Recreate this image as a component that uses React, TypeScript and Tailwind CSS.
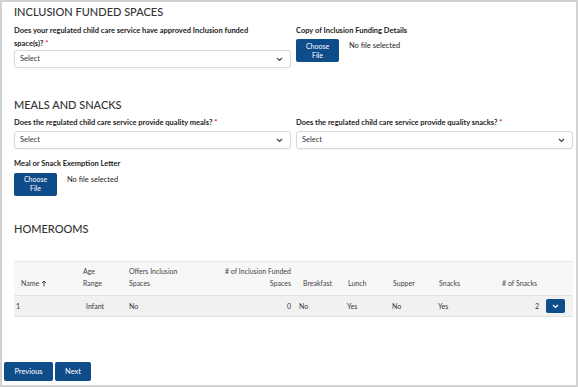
import React from "react";

const BLUE = "bg-[#0f4c8a]";

function Chevron({ className = "" }: { className?: string }) {
  return (
    <svg width="7" height="5" viewBox="0 0 7 5" className={className}>
      <polyline points="1,1 3.5,3.5 6,1" fill="none" stroke="currentColor" strokeWidth="1.2" />
    </svg>
  );
}

function SelectBox() {
  return (
    <div className="h-[18px] border border-[#d9d9d9] rounded-[3px] bg-white flex items-center justify-between pl-[5px] pr-[7px] shadow-[0_1px_1px_rgba(0,0,0,0.04)]">
      <span className="text-[7.5px] text-[#333]">Select</span>
      <Chevron className="text-[#444]" />
    </div>
  );
}

function FileInput() {
  return (
    <div className="flex items-start">
      <button className={`${BLUE} w-[43px] h-[23px] rounded-[2px] text-white text-[7px] leading-[9px] flex flex-col items-center justify-center`}>
        <span>Choose</span>
        <span>File</span>
      </button>
      <span className="ml-[10px] mt-[1px] text-[7.5px] leading-[12px] text-[#222]">No file selected</span>
    </div>
  );
}

const Star = () => <span className="text-[#d4262c]"> *</span>;

const cols = "grid grid-cols-[69px_46px_71px_94px_51px_45px_46px_54px_51px_32px]";

export default function App() {
  return (
    <div
      className="w-[578px] h-[387px] border-2 border-[#d2d2d2] bg-white pl-[12px] pr-[3px] pt-[2px] text-[#222]"
      style={{ fontFamily: "Lato, 'Noto Sans', sans-serif" }}
    >
      <h2 className="mt-[1px] text-[11px] leading-[14px] text-[#333] font-medium">INCLUSION FUNDED SPACES</h2>
      <div className="grid grid-cols-2 gap-[5px] mt-[6px]">
        <div>
          <div className="text-[7.5px] leading-[12.5px] font-bold">
            Does your regulated child care service have approved Inclusion funded
            <br />
            space(s)?<Star />
          </div>
          <SelectBox />
        </div>
        <div>
          <div className="text-[7.5px] leading-[12.5px] font-bold">Copy of Inclusion Funding Details</div>
          <div className="mt-[1.5px]">
            <FileInput />
          </div>
        </div>
      </div>

      <h2 className="mt-[30px] text-[11px] leading-[14px] text-[#333] font-medium">MEALS AND SNACKS</h2>
      <div className="grid grid-cols-2 gap-[5px] mt-[5px]">
        <div>
          <div className="text-[7.5px] leading-[12.5px] font-bold">
            Does the regulated child care service provide quality meals?<Star />
          </div>
          <div className="mt-[1.5px]">
            <SelectBox />
          </div>
        </div>
        <div>
          <div className="text-[7.5px] leading-[12.5px] font-bold">
            Does the regulated child care service provide quality snacks?<Star />
          </div>
          <div className="mt-[1.5px]">
            <SelectBox />
          </div>
        </div>
      </div>
      <div className="mt-[9px] text-[7.5px] leading-[12.5px] font-bold">Meal or Snack Exemption Letter</div>
      <div className="mt-[2px]">
        <FileInput />
      </div>

      <h2 className="mt-[26.5px] text-[11px] leading-[14px] text-[#333] font-medium">HOMEROOMS</h2>

      <div className="mt-[25px] text-[7px] text-[#333]">
        <div className={`${cols} h-[34px] bg-[#f7f7f7] border-t border-[#e8e8e8] items-end pb-[6px] leading-[12px] text-[#444]`}>
          <div className="pl-[7px] flex items-center gap-[2px]">
            Name
            <svg width="6" height="7" viewBox="0 0 6 7">
              <path d="M3 6.5V1M1 3L3 1L5 3" fill="none" stroke="#333" strokeWidth="0.9" />
            </svg>
          </div>
          <div>Age<br />Range</div>
          <div>Offers Inclusion<br />Spaces</div>
          <div className="text-right pr-[3px]"># of Inclusion Funded<br />Spaces</div>
          <div className="pl-[9px]">Breakfast</div>
          <div className="pl-[3px]">Lunch</div>
          <div className="pl-[3px]">Supper</div>
          <div className="pl-[3px]">Snacks</div>
          <div className="text-right pr-[4px]"># of Snacks</div>
          <div />
        </div>
        <div className={`${cols} h-[22px] bg-[#f1f1f1] border-t border-b border-[#e2e2e2] items-center leading-[12px]`}>
          <div className="pl-[2px]">1</div>
          <div className="pl-[3px]">Infant</div>
          <div>No</div>
          <div className="text-right pr-[3px]">0</div>
          <div className="pl-[5px]">No</div>
          <div className="pl-[2px]">Yes</div>
          <div className="pl-[2px]">No</div>
          <div className="pl-[2px]">Yes</div>
          <div className="text-right pr-[2px]">2</div>
          <div className="pl-[5px]">
            <button className={`${BLUE} w-[19px] h-[14px] rounded-[2px] flex items-center justify-center text-white`}>
              <Chevron />
            </button>
          </div>
        </div>
      </div>

      <div className="mt-[45px] -ml-[10px] flex gap-[2px]">
        <button className={`${BLUE} w-[49px] h-[19px] rounded-[2px] text-white text-[7.5px]`}>Previous</button>
        <button className={`${BLUE} w-[36px] h-[19px] rounded-[2px] text-white text-[7.5px]`}>Next</button>
      </div>
    </div>
  );
}
